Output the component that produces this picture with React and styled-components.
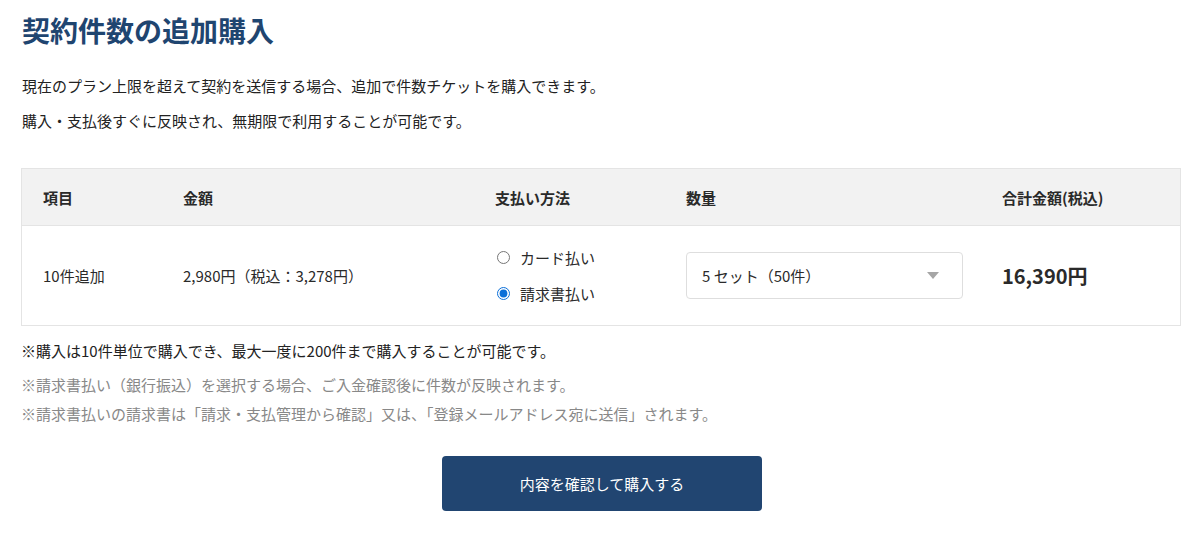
import React from "react";
import styled, { createGlobalStyle } from "styled-components";

const Global = createGlobalStyle`
  html, body { margin: 0; padding: 0; background: #fff; }
  body {
    font-family: "Noto Sans CJK JP", "Noto Sans", sans-serif;
    color: #222;
  }
`;

const Page = styled.div`
  padding: 10px 23px 0 21px;
  display: flex;
  flex-direction: column;
`;

const Title = styled.h1`
  margin: 0 0 0 1px;
  font-size: 28px;
  line-height: 40px;
  font-weight: 700;
  color: #1f4570;
`;

const Lead = styled.p`
  margin: 18px 0 0 1px;
  font-size: 15px;
  line-height: 35px;
  color: #222;
`;

const Table = styled.div`
  margin-top: 30px;
  border: 1px solid #e4e4e4;
  display: grid;
  grid-template-columns: 140px 312px 191px 316px 1fr;
`;

const HeadCell = styled.div`
  background: #f2f2f2;
  height: 56px;
  border-bottom: 1px solid #e4e4e4;
  display: flex;
  align-items: center;
  padding-left: 21px;
  font-size: 15px;
  font-weight: 700;
  color: #2a2a2a;
`;

const Cell = styled.div`
  height: 99px;
  display: flex;
  align-items: center;
  padding-left: ${(p) => p.$pl ?? 21}px;
  font-size: ${(p) => p.$size ?? 15}px;
  font-weight: ${(p) => (p.$bold ? 700 : 400)};
  color: #2a2a2a;
`;

const RadioGroup = styled.div`
  display: flex;
  flex-direction: column;
  gap: 13px;
  margin-left: 1px;
`;

const RadioLabel = styled.label`
  display: flex;
  align-items: center;
  gap: 10px;
  font-size: 15px;
  line-height: 23px;
  color: #2a2a2a;
`;

const Radio = styled.input`
  margin: 0;
  width: 13px;
  height: 13px;
  accent-color: #0b6fd8;
`;

const SelectBox = styled.div`
  width: 277px;
  height: 47px;
  box-sizing: border-box;
  border: 1px solid #dedede;
  border-radius: 4px;
  display: flex;
  align-items: center;
  justify-content: space-between;
  padding: 0 23px 0 15px;
  font-size: 15px;
  color: #2a2a2a;
  background: #fff;
`;

const Notes = styled.div`
  margin-top: 12px;
  display: flex;
  flex-direction: column;
`;

const Note = styled.p`
  margin: 0;
  font-size: 15px;
  line-height: ${(p) => (p.$first ? 26 : 29)}px;
  color: ${(p) => (p.$muted ? "#888" : "#222")};
  padding-top: ${(p) => (p.$gap ? 6 : 0)}px;
`;

const Actions = styled.div`
  display: flex;
  justify-content: center;
  margin-top: 28px;
  padding-left: 2px;
`;

const Button = styled.button`
  width: 320px;
  height: 55px;
  border: none;
  border-radius: 4px;
  background: #214571;
  color: #fff;
  font-family: inherit;
  font-size: 15px;
  cursor: pointer;
`;

export default function App() {
  return (
    <>
      <Global />
      <Page>
        <Title>契約件数の追加購入</Title>
        <Lead>
          現在のプラン上限を超えて契約を送信する場合、追加で件数チケットを購入できます。
          <br />
          購入・支払後すぐに反映され、無期限で利用することが可能です。
        </Lead>
        <Table>
          <HeadCell>項目</HeadCell>
          <HeadCell>金額</HeadCell>
          <HeadCell>支払い方法</HeadCell>
          <HeadCell>数量</HeadCell>
          <HeadCell>合計金額(税込)</HeadCell>

          <Cell>10件追加</Cell>
          <Cell>2,980円（税込：3,278円）</Cell>
          <Cell $pl={22}>
            <RadioGroup>
              <RadioLabel>
                <Radio type="radio" name="pay" />
                カード払い
              </RadioLabel>
              <RadioLabel>
                <Radio type="radio" name="pay" defaultChecked />
                請求書払い
              </RadioLabel>
            </RadioGroup>
          </Cell>
          <Cell>
            <SelectBox>
              <span>5 セット（50件）</span>
              <svg width="12" height="7" viewBox="0 0 12 7">
                <path d="M0 0 L12 0 L6 7 Z" fill="#a6a6a6" />
              </svg>
            </SelectBox>
          </Cell>
          <Cell $size={20} $bold>16,390円</Cell>
        </Table>
        <Notes>
          <Note $first>※購入は10件単位で購入でき、最大一度に200件まで購入することが可能です。</Note>
          <Note $muted $gap>※請求書払い（銀行振込）を選択する場合、ご入金確認後に件数が反映されます。</Note>
          <Note $muted>※請求書払いの請求書は「請求・支払管理から確認」又は、「登録メールアドレス宛に送信」されます。</Note>
        </Notes>
        <Actions>
          <Button>内容を確認して購入する</Button>
        </Actions>
      </Page>
    </>
  );
}
